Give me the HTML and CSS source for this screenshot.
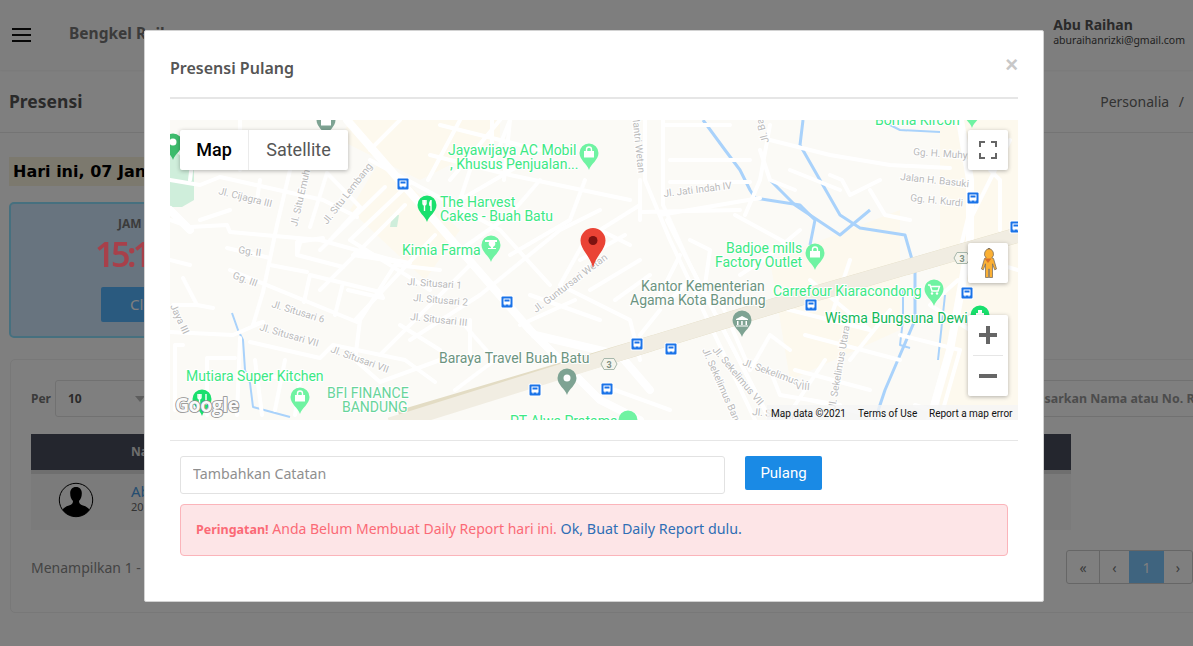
FILE: index.html
```html
<!DOCTYPE html>
<html lang="id">
<head>
<meta charset="utf-8">
<title>Presensi</title>
<link rel="stylesheet" href="styles.css">
</head>
<body>
<div class="page">
  <header class="topbar">
    <div class="burger"><span></span><span></span><span></span></div>
    <div class="brand">Bengkel Raihan</div>
    <div class="user"><strong>Abu Raihan</strong><small>aburaihanrizki@gmail.com</small></div>
  </header>
  <div class="titlebar">
    <h1>Presensi</h1>
    <div class="crumb">Personalia <i>/</i></div>
  </div>
  <main class="content">
    <div class="today">Hari ini, 07 Januari 2021</div>
    <section class="clock">
      <div class="clock-label">JAM</div>
      <div class="clock-time">15:12:08</div>
      <div class="clock-btn">Clock Out</div>
    </section>
    <section class="panel">
      <div class="filters">
        <span class="per">Per</span>
        <div class="select">10<b></b></div>
        <div class="search">Cari berdasarkan Nama atau No. Registrasi</div>
      </div>
      <div class="thead"><span>Nama</span></div>
      <div class="tgap"></div>
      <div class="trow">
        <svg class="avatar" viewBox="0 0 36 36"><circle cx="18" cy="18" r="16.7" class="av-ring"/><path class="av-fill" d="M18 5c4 0 6 3 5.800 6.500c0 3-1 5.500-2.800 7.500c0 2 1 3.500 4 4.500c3.500 1 5.500 2.500 6.500 4.500a17 17 0 0 1-27 0c1-2 3-3.500 6.500-4.500c3-1 4-2.500 4-4.500c-1.800-2-2.800-4.500-2.800-7.500c-.2-3.500 1.800-6.500 5.800-6.500z"/></svg>
        <div class="person"><a>Abu Raihan</a><small>2019</small></div>
      </div>
      <div class="tfoot">
        <span>Menampilkan 1 - 1 dari 1 data</span>
        <nav class="pager"><span class="p1">«</span><span class="p2">‹</span><span class="p3">1</span><span class="p4">›</span></nav>
      </div>
    </section>
  </main>
</div>
<div class="backdrop"></div>
<div class="modal">
  <div class="modal-head"><h2>Presensi Pulang</h2><span class="close">×</span></div>
  <div class="map">
    <svg class="map-art" viewBox="0 0 848 300" aria-label="Peta">
      <defs>
        <path id="pin" d="M0 17C-1.800 11-9.500 7-9.500 0A9.500 9.500 0 1 1 9.500 0C9.500 7 1.800 11 0 17Z"/>
        <g id="bus"><rect x="-6.500" y="-6.500" width="13" height="13" rx="1.500" class="bus-edge"/><rect x="-5.500" y="-5.500" width="11" height="11" rx="1" class="bus-bg"/><path class="bus-fg" d="M-3.500-3.500h7v6h-1v1h-1v-1h-3v1h-1v-1h-1z"/><path class="bus-bg" d="M-2.500-2.500h5v2h-5z"/></g>
        <g id="hex"><path class="hex" d="M-5-5.500h10l3 5.500-3 5.500h-10l-3-5.500z"/><text class="hex-t" y="3.500" text-anchor="middle">3</text></g>
        <g id="bag"><path class="glyph" d="M-5-2h10v6.500h-10z"/><path class="gline" d="M-2.500-2v-1.500a2.500 2.500 0 0 1 5 0v1.500"/></g>
      </defs>

      <rect class="land" width="848" height="300"/>
      <path class="warm" d="M180 0L330 0L330 20L250 60L170 20Z"/>
      <path class="warm" d="M210 40L290 110L255 160L180 90Z"/>
      <path class="warm" d="M770 0H848V300H770Z"/>
      <path class="warm" d="M600 140L730 90V210L620 260Z"/>
      <path class="park" d="M0 20H24V80L12 87H0Z"/>
      <path class="park" d="M222 95l7 0 -2 12 -7 0z"/>

      <g class="river">
        <path d="M533 0L555 30L570 50L580 70L585 78L630 85L645 100L640 125"/>
        <path d="M633 0L630 25L670 95L690 108L735 115L745 150V200L730 235L715 270L705 300"/>
        <path d="M600 60L625 85L670 115L700 90"/>
        <path class="thin" d="M733 170V200L730 225L740 228"/>
        <path class="thin" d="M775 175L768 240"/>
        <path class="thin" d="M710 0L730 10L770 12"/>
        <path class="thin" d="M62 193L68 210L73 220L75 250L80 263L83 287L120 297"/>
      </g>

      <g class="road">
        <path d="M50 57L153 80L187 97"/>
        <path d="M120 50L107 105L93 172L83 205"/>
        <path d="M70 0V50"/>
        <path d="M20 107L57 105L60 112L150 120L230 142"/>
        <path d="M90 60L87 80"/>
        <path d="M157 53L140 107"/>
        <path d="M157 53L190 87L160 120"/>
        <path d="M215 67L150 130"/>
        <path d="M130 123L127 135L173 147"/>
        <path d="M185 133L240 143"/>
        <path d="M57 128L100 138"/>
        <path d="M60 150L187 202"/>
        <path d="M0 212L63 215L93 202L83 205"/>
        <path d="M80 222L150 238L163 225L235 240L265 262"/>
        <path d="M70 218L67 295"/>
        <path d="M37 238H65M37 238V295"/>
        <path d="M13 158L27 185L43 188M3 185H27"/>
        <path d="M127 135V122L153 118"/>
        <path d="M140 155L173 163L165 195M140 155L134 182M173 163L210 172L213 178L178 170"/>
        <path d="M183 135L228 142"/>
        <path d="M100 145L137 152"/>
        <path d="M0 140L20 145M0 100L20 107M0 60L30 65L50 57"/>
        <path d="M95 255L130 262L125 295M115 240L105 290M85 240L92 295"/>
        <path d="M13 225H5V290"/>
        <path d="M240 63L180 120L260 170M200 40L330 110L380 165"/>
        <path d="M235 85L150 170M265 115L185 200M300 145L210 235"/>
        <path d="M290 0L258 60M330 0L280 60M230 0L200 30"/>
        <path d="M270 5L370 30M340 0L320 50M260 35L340 55L460 80"/>
        <path d="M300 50L290 80L350 45M370 60L340 95L290 130M415 60L400 100L340 135"/>
        <path d="M430 90L390 110L310 175L240 220M470 85L430 110L460 125M455 115L410 140"/>
        <path d="M415 120L390 165L460 200L470 240M360 175L430 200M405 180L350 205"/>
        <path d="M322 0V30M340 0L334 60M270 150L225 145L190 200L185 240L210 262L270 240M230 205L270 230M300 200V240"/>
        <path d="M495 5H560M500 40H580M500 62H580M490 95L590 78M470 92L570 90"/>
        <path d="M600 20L660 35L720 45L780 48M600 5L590 60L575 95M565 95L620 125M620 50L670 70"/>
        <path d="M590 30L600 60L625 70M700 70L715 95L740 100M660 55L672 60L680 75L710 60M630 110L600 135L570 155"/>
        <path d="M500 180L515 165L550 180L580 250M520 120L540 130L535 165M510 135L490 175M445 270L500 290"/>
        <path d="M497 100L520 145L600 300M470 100V60"/>
        <path d="M600 185L700 210L640 160M680 140L660 200M720 190L680 240M625 250L700 270M635 215L730 240M640 280L720 300"/>
        <path d="M730 215L790 230L770 300M745 285L790 300M788 160L760 185L800 210M780 130L848 150"/>
        <path d="M600 250L610 275L670 285M580 250L600 215L620 230L600 215M615 300L655 240"/>
        <path d="M420 170L470 140M445 180L480 155M290 200L325 240L285 270"/>
        <path d="M820 50L830 60V110M840 20L800 100M790 130L800 90"/>
        <path d="M0 20H25L20 60M30 100L60 90"/>
        <path d="M493 0V85L520 145L600 300"/>
        <path d="M475 0V60L500 120L585 300"/>
      </g>
      <g class="road-wide">
        <path d="M177 0L360 210L430 280L470 300"/>
        <path d="M0 90L20 110M0 20L15 35"/>
        <path d="M790 0L800 60V120L780 230L760 300"/>
        <path d="M365 215L450 235L480 270"/>
      </g>
      <path class="highway-edge" d="M230 298L460 230L630 178L848 115"/>
      <path class="highway" d="M220 305L460 230L630 178L848 115"/>
      <path class="road" d="M490 190L470 215"/>

      <g class="label">
        <text x="127" y="107" transform="rotate(-77 127 107)">Jl. Situ Emuh</text>
        <text x="157" y="105" transform="rotate(-52 157 105)">Jl. Situ Lembang</text>
        <text x="48" y="74" transform="rotate(14 48 74)">Jl. Cijagra III</text>
        <text x="68" y="133" transform="rotate(8 68 133)">Gg. II</text>
        <text x="62" y="158" transform="rotate(20 62 158)">Gg. III</text>
        <text x="101" y="187" transform="rotate(17 101 187)">Jl. Situsari 6</text>
        <text x="89" y="210" transform="rotate(16 89 210)">Jl. Situsari VII</text>
        <text x="160" y="232" transform="rotate(20 160 232)">Jl. Situsari VII</text>
        <text x="0" y="186" transform="rotate(65 0 186)">Jaya III</text>
        <text x="494" y="77" transform="rotate(-7 494 77)">Jl. Jati Indah IV</text>
        <text x="366" y="193" transform="rotate(-37 366 193)">Jl. Guntursari Wetan</text>
        <text x="237" y="165" transform="rotate(4 237 165)">Jl. Situsari 1</text>
        <text x="243" y="181" transform="rotate(5 243 181)">Jl. Situsari 2</text>
        <text x="240" y="200" transform="rotate(6 240 200)">Jl. Situsari III</text>
        <text x="462" y="-6" transform="rotate(84 462 -6)">Mantri Wetan</text>
        <text x="599" y="22" transform="rotate(-105 599 22)">Jl. Bali</text>
        <text x="743" y="35" transform="rotate(4 743 35)">Gg. H. Muhyi</text>
        <text x="730" y="60" transform="rotate(6 730 60)">Jalan H. Basuki</text>
        <text x="740" y="81" transform="rotate(6 740 81)">Gg. H. Kurdi</text>
        <text x="542" y="230" transform="rotate(50 542 230)">Jl. Sekelimus VII</text>
        <text x="532" y="230" transform="rotate(66 532 230)">Jl. Sekelimus Baru</text>
        <text x="572" y="245" transform="rotate(20 572 245)">Jl. Sekelimus V</text>
        <text x="665" y="290" transform="rotate(-80 665 290)">Jl. Sekelimus Utara</text>
        <text x="625" y="269" transform="rotate(5 625 269)">VIII</text>
        <text x="582" y="295" transform="rotate(6 582 295)">Jl. Sekelimus</text>
      </g>

      <use href="#hex" x="439" y="244"/>
      <use href="#hex" x="792" y="138"/>

      <g class="poi">
        <text x="278" y="35">Jayawijaya AC Mobil</text>
        <text x="280" y="49">, Khusus Penjualan...</text>
        <text x="270" y="87">The Harvest</text>
        <text x="270" y="101">Cakes - Buah Batu</text>
        <text x="232" y="135">Kimia Farma</text>
        <text x="556" y="133">Badjoe mills</text>
        <text x="545" y="147">Factory Outlet</text>
        <text x="603" y="176">Carrefour Kiaracondong</text>
        <text x="16" y="261">Mutiara Super Kitchen</text>
        <text x="340" y="306">PT Alwa Pratama</text>
        <text x="705" y="5">Borma Kircon</text>
      </g>
      <g class="poi-dark"><text x="655" y="203">Wisma Bungsuna Dewi</text></g>
      <g class="poi-sage">
        <text x="471" y="171">Kantor Kementerian</text>
        <text x="460" y="185">Agama Kota Bandung</text>
        <text x="269" y="243">Baraya Travel Buah Batu</text>
      </g>
      <g class="poi-mint">
        <text x="157" y="278">BFI FINANCE</text>
        <text x="172" y="292">BANDUNG</text>
      </g>

      <use href="#pin" x="419" y="33" class="pin-light"/><use href="#bag" x="419" y="33"/>
      <use href="#pin" x="645" y="133" class="pin-light"/><use href="#bag" x="645" y="133"/>
      <use href="#pin" x="130" y="277" class="pin-light"/><use href="#bag" x="130" y="277"/>
      <use href="#pin" x="458" y="300" class="pin-light"/>
      <use href="#pin" x="802" y="-9" class="pin-light"/>

      <use href="#pin" x="321" y="125" class="pin-light"/>
      <path class="glyph" d="M315 120h12v2h-2a4 4 0 0 1-2 5v1h3v1h-8v-1h3v-1a4 4 0 0 1-2-5h-4z"/>

      <use href="#pin" x="764" y="169" class="pin-light"/>
      <path class="gline" d="M758 165h2l2 6h6l1.500-4.500h-9"/><circle class="glyph" cx="762" cy="173.500" r="1.200"/><circle class="glyph" cx="767" cy="173.500" r="1.200"/>

      <use href="#pin" x="257" y="85" class="pin-strong"/>
      <path class="gline" d="M253 80v3.500a1.500 1.500 0 0 0 3 0v-3.500M254.500 80v11M261 80v11"/><path class="glyph" d="M261 80c-2 1-2.500 4-1.500 6h1.500z"/>

      <use href="#pin" x="32" y="279" class="pin-strong"/>
      <path class="gline" d="M28 274v3.500a1.500 1.500 0 0 0 3 0v-3.500M29.500 274v11M36 274v11"/>

      <use href="#pin" x="810" y="195" class="pin-strong"/>
      <path class="glyph" d="M808 190h4v3h2v2h-8v-2h2z"/>

      <use href="#pin" x="572" y="200" class="pin-sage"/>
      <path class="glyph" d="M566 199l6-3 6 3v1h-12zM567 201h1.500v4h-1.500zM571.200 201h1.500v4h-1.500zM575.500 201h1.500v4h-1.500zM566 205.500h12v1h-12z"/>

      <use href="#pin" x="397" y="258" class="pin-sage"/><circle class="glyph" cx="397" cy="258" r="3.500"/>
      <use href="#pin" x="156" y="0" class="pin-sage"/><use href="#bag" x="156" y="1"/>

      <use href="#pin" x="3" y="23" class="pin-park"/><circle class="glyph" cx="3" cy="22" r="3.500"/>

      <use href="#bus" x="233" y="64"/>
      <use href="#bus" x="337" y="182"/>
      <use href="#bus" x="467" y="224"/>
      <use href="#bus" x="501" y="229"/>
      <use href="#bus" x="365" y="270"/>
      <use href="#bus" x="437" y="269"/>
      <use href="#bus" x="803" y="78"/>
      <use href="#bus" x="797" y="173"/>
      <use href="#bus" x="641" y="185"/>
      <use href="#bus" x="846" y="107"/>

      <path class="marker" d="M423 148C420.500 136 410.500 130 410.500 120.500A12.500 12.500 0 1 1 435.500 120.500C435.500 130 425.500 136 423 148Z"/>
      <circle class="marker-dot" cx="423" cy="120.500" r="4.500"/>

      <text class="google" x="5" y="292">Google</text>

      <rect class="attr-bg" x="597" y="285" width="251" height="15"/>
      <g class="attr">
        <text x="601" y="297">Map data ©2021</text>
        <text x="688" y="297">Terms of Use</text>
        <text x="759" y="297">Report a map error</text>
      </g>
    </svg>

    <div class="maptype"><span class="mt-on">Map</span><span class="mt-off">Satellite</span></div>
    <div class="ctl ctl-full">
      <svg viewBox="0 0 18 18"><path class="ctl-stroke" d="M1 6V1h5M12 1h5v5M17 12v5h-5M6 17H1v-5"/></svg>
    </div>
    <div class="ctl ctl-peg">
      <svg viewBox="0 0 18 30"><path class="peg" d="M9 .5a5.500 5.500 0 0 1 3.800 9.500l1.700.5l3 10.500l-1.800.800l-2.200-6v13.700h-3.200v-8.500h-.6v8.500h-3.200v-13.700l-2.200 6l-1.800-.800l3-10.500l1.700-.5a5.500 5.500 0 0 1 3.800-9.500z"/><path class="peg-v" d="M5.500 10.500h7l-3.500 4.500z"/></svg>
    </div>
    <div class="zoomctl">
      <div class="zbtn"><svg viewBox="0 0 18 18"><path class="z-ico" d="M7 0h4v7h7v4h-7v7h-4v-7h-7v-4h7z"/></svg></div>
      <div class="zsep"></div>
      <div class="zbtn"><svg viewBox="0 0 18 18"><path class="z-ico" d="M0 7h18v4h-18z"/></svg></div>
    </div>
  </div>
  <hr class="rule">
  <div class="form-row">
    <input class="note" type="text" placeholder="Tambahkan Catatan">
    <button class="go" type="button">Pulang</button>
  </div>
  <div class="alert"><strong>Peringatan!</strong> Anda Belum Membuat Daily Report hari ini. <a>Ok, Buat Daily Report dulu.</a></div>
</div>
</body>
</html>
```

FILE: styles.css
```css
* { box-sizing: border-box; }
html, body { margin: 0; height: 100%; }
body { overflow: hidden; background: #fff; font-family: "Noto Sans", sans-serif; color: #333; }

.page { width: 1193px; height: 646px; overflow: hidden; }
.topbar { height: 70px; display: flex; align-items: center; background: #fdfdfd; box-shadow: 0 1px 2px rgba(0,0,0,.05); }
.burger { width: 19px; margin-left: 12px; display: flex; flex-direction: column; gap: 4px; }
.burger span { height: 2px; background: #111; }
.brand { margin-left: 38px; margin-top: -4px; font-size: 15.500px; font-weight: 700; color: #777; white-space: nowrap; }
.user { margin-left: auto; margin-right: 8px; margin-top: -8px; display: flex; flex-direction: column; }
.user strong { font-size: 14px; line-height: 18px; font-weight: 700; color: #555; }
.user small { font-size: 10.500px; line-height: 13px; color: #444; }

.titlebar { height: 63px; display: flex; align-items: center; justify-content: space-between; padding: 0 3px 0 9px; border-bottom: 1px solid #e8e8e8; }
.titlebar h1 { margin: 0; font-size: 17.500px; font-weight: 700; color: #555; }
.crumb { font-size: 14px; color: #666; white-space: nowrap; }
.crumb i { font-style: normal; margin-left: 6px; margin-right: 6px; }

.content { padding: 24px 9px 0; }
.today { width: 240px; height: 29px; background: #f9f3dc; line-height: 29px; padding-left: 4px; font-family: "DejaVu Sans", sans-serif; font-weight: 700; font-size: 16px; color: #000; white-space: nowrap; overflow: hidden; }
.clock { margin-top: 16px; width: 320px; height: 136px; border: 2px solid #8ce0ff; border-radius: 5px; background: #d0e8ff; padding: 11px 0 0 0; }
.clock-label { margin-left: 107px; font-size: 12px; font-weight: 700; color: #777; }
.clock-time { position: relative; z-index: 1; margin-left: 84px; font-size: 34px; letter-spacing: -3.500px; font-weight: 600; line-height: 44px; color: #a8404a; white-space: nowrap; }
.clock-btn { margin: 11px 0 0 90px; width: 160px; height: 35px; line-height: 35px; padding-left: 29px; background: #54b4ff; color: #fff; border-radius: 2px; font-size: 15px; }

.panel { margin-top: 21px; margin-left: 1px; width: 1260px; height: 254px; border: 1px solid #f0f0f0; border-radius: 5px; padding: 20px 20px 0; }
.filters { height: 37px; display: flex; align-items: center; }
.per { font-size: 12px; font-weight: 700; color: #777; }
.select { margin-left: 4px; width: 100px; height: 37px; line-height: 36px; padding-left: 12px; border: 1px solid #e2e2e2; border-radius: 3px; font-size: 12px; font-weight: 700; color: #555; position: relative; flex: none; }
.select b { position: absolute; right: 9px; top: 15px; border: 5px solid transparent; border-top: 6px solid #bbb; border-bottom: 0; }
.search { margin-left: 688px; width: 500px; height: 37px; line-height: 36px; padding-left: 137px; border: 1px solid #e2e2e2; font-size: 12.400px; font-weight: 700; color: #999; white-space: nowrap; flex: none; }
.thead { margin-top: 17px; width: 1040px; height: 36px; background: #494c5c; color: #ddd; font-size: 12px; font-weight: 700; line-height: 36px; padding-left: 100px; }
.tgap { width: 1040px; height: 4px; background: #dedede; }
.trow { width: 1040px; height: 56px; background: #f6f6f6; display: flex; align-items: flex-start; padding: 8px 0 0 27px; }
.avatar { width: 36px; height: 36px; }
.av-ring { fill: none; stroke: #000; stroke-width: 1; }
.av-fill { fill: #000; }
.person { margin-left: 37px; display: flex; flex-direction: column; }
.person a { font-size: 15px; line-height: 18px; color: #4a9ae0; }
.person small { font-size: 11px; line-height: 14px; color: #666; }
.tfoot { width: 1162px; margin-top: 20px; display: flex; align-items: center; justify-content: space-between; font-size: 14px; color: #888; }
.pager { display: flex; height: 34px; border: 1px solid #ccc; border-radius: 3px; align-items: stretch; font-size: 14px; color: #777; }
.pager span { display: flex; align-items: center; justify-content: center; }
.p1 { width: 33px; border-right: 1px solid #ccc; }
.p2 { width: 29px; }
.pager .p3 { width: 35px; background: #7fc8ff; color: #fff; }
.p4 { width: 28px; }

.backdrop { position: fixed; inset: 0; background: rgba(0,0,0,.5); }

.modal { position: fixed; z-index: 2; left: 144px; top: 30px; width: 900px; height: 572px; background: #fff; border: 1px solid #d2d2d2; border-radius: 2px; padding: 0 25px; }
.modal-head { height: 68px; display: flex; align-items: center; justify-content: space-between; border-bottom: 2px solid #e6e6e6; padding-top: 8px; }
.modal-head h2 { margin: 0; font-size: 16px; font-weight: 600; color: #555; }
.close { font-family: "Liberation Sans", sans-serif; font-size: 22px; font-weight: 700; color: #c8c8c8; line-height: 1; margin-top: -6px; }

.map { position: relative; margin-top: 21px; width: 848px; height: 300px; overflow: hidden; background: #fbfaf6; font-family: Roboto, sans-serif; }
.map-art { display: block; width: 848px; height: 300px; }
.land { fill: #fbfaf6; }
.warm { fill: #fdf9ee; }
.park { fill: #cfeedb; }
.river path { fill: none; stroke: #a9d2fb; stroke-width: 3; stroke-linejoin: round; }
.river path.thin { stroke-width: 2; }
.road path, path.road { fill: none; stroke: #fff; stroke-width: 4; stroke-linecap: round; stroke-linejoin: round; }
.road-wide path { fill: none; stroke: #fff; stroke-width: 8; stroke-linecap: round; stroke-linejoin: round; }
.highway { fill: none; stroke: #f1ede2; stroke-width: 15; }
.highway-edge { fill: none; stroke: #e3dcc4; stroke-width: 15.500; }
.label text { font-size: 10px; fill: #bababa; stroke: #fff; stroke-width: 2px; paint-order: stroke; }
.poi text, .poi-dark text, .poi-sage text, .poi-mint text { font-size: 14px; stroke: #fff; stroke-width: 2px; paint-order: stroke; }
.poi text { fill: #3de884; }
.poi-dark text { fill: #12b857; }
.poi-sage text { fill: #6c9480; }
.poi-mint text { fill: #68d49a; }
.pin-light { fill: #6ff3a2; }
.pin-strong { fill: #19e06d; }
.pin-sage { fill: #7ea393; }
.pin-park { fill: #3dbb6c; }
.glyph { fill: #fff; }
.gline { fill: none; stroke: #fff; stroke-width: 1.400; }
.bus-edge { fill: #fff; }
.bus-bg { fill: #1a73e8; }
.bus-fg { fill: #fff; }
.hex { fill: #f4f4ec; stroke: #a8b8ac; stroke-width: 1; }
.hex-t { font-size: 9px; font-weight: 700; fill: #7f8f84; }
.marker { fill: #ea4335; }
.marker-dot { fill: #7d1210; }
.google { font-family: "Open Sans", sans-serif; font-size: 19.500px; font-weight: 700; fill: #fafafa; stroke: #8c8c8c; stroke-width: 1.600px; paint-order: stroke; letter-spacing: -.5px; }
.attr-bg { fill: #f5f5f5; fill-opacity: .8; }
.attr text { font-size: 10px; fill: #111; }

.maptype { position: absolute; left: 10px; top: 10px; height: 40px; display: flex; background: #fff; border-radius: 2px; box-shadow: 0 1px 4px rgba(0,0,0,.3); font-size: 18px; line-height: 40px; }
.mt-on { width: 69px; text-align: center; color: #000; font-weight: 500; border-right: 1px solid #ebebeb; }
.mt-off { width: 99px; text-align: center; color: #565656; }
.ctl { position: absolute; left: 798px; width: 40px; height: 40px; background: #fff; border-radius: 2px; box-shadow: 0 1px 4px rgba(0,0,0,.3); display: flex; align-items: center; justify-content: center; }
.ctl-full { top: 10px; }
.ctl-full svg { width: 18px; height: 18px; }
.ctl-stroke { fill: none; stroke: #666; stroke-width: 2; }
.ctl-peg { top: 123px; }
.ctl-peg svg { width: 18px; height: 30px; }
.peg { fill: #fbb034; stroke: #7c7162; stroke-width: .8; }
.peg-v { fill: #d9702a; }
.zoomctl { position: absolute; left: 798px; top: 195px; width: 40px; height: 81px; background: #fff; border-radius: 2px; box-shadow: 0 1px 4px rgba(0,0,0,.3); display: flex; flex-direction: column; align-items: center; }
.zbtn { height: 40px; width: 40px; display: flex; align-items: center; justify-content: center; }
.zbtn svg { width: 18px; height: 18px; }
.z-ico { fill: #666; }
.zsep { width: 30px; height: 1px; background: #e6e6e6; flex: none; }

.rule { margin: 20px 0 0; border: 0; border-top: 1px solid #e6e6e6; }
.form-row { margin: 15px 0 0 10px; display: flex; align-items: flex-start; gap: 20px; }
.note { width: 545px; height: 38px; border: 1px solid #e2e2e2; border-radius: 3px; padding: 0 12px 3px; font-family: "Noto Sans", sans-serif; font-size: 14.200px; color: #333; background: #fff; }
.note::placeholder { color: #8f8f8f; opacity: 1; }
.go { width: 77px; height: 34px; border: 0; border-radius: 2px; background: #1a8ae5; color: #fff; font-family: Roboto, sans-serif; font-size: 15px; padding: 0; }
.alert { margin: 10px 10px 0; height: 52px; line-height: 48px; border: 1px solid #fbb4ba; border-radius: 4px; background: #fde5e7; padding-left: 15px; font-size: 14px; color: #fb6a76; white-space: nowrap; }
.alert strong { font-size: 12.500px; font-weight: 700; }
.alert a { color: #2f6eb5; font-size: 14.300px; }
```
